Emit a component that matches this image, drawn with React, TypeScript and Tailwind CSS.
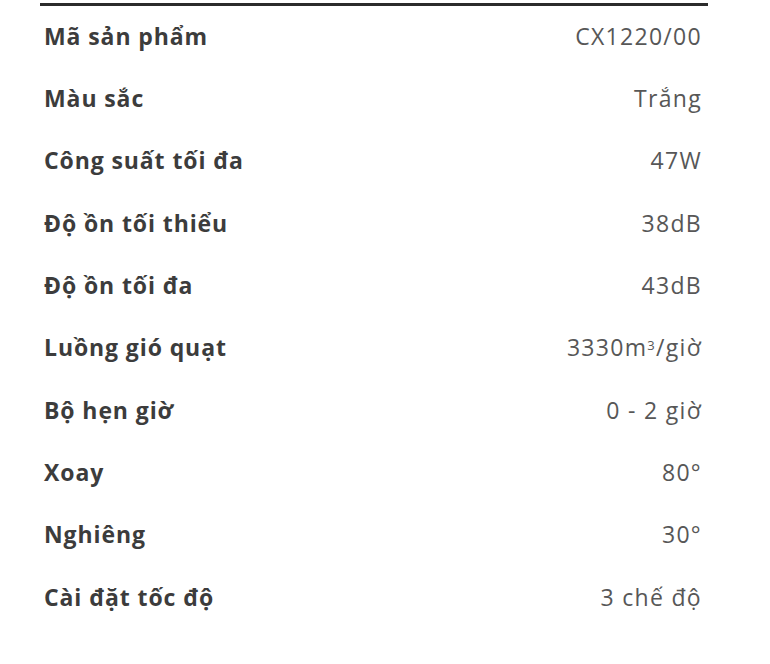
import React from "react";

// Types
interface specType {
  label: string;
  value: React.ReactNode;
}

const specs: specType[] = [
  { label: "Mã sản phẩm", value: "CX1220/00" },
  { label: "Màu sắc", value: "Trắng" },
  { label: "Công suất tối đa", value: "47W" },
  { label: "Độ ồn tối thiểu", value: "38dB" },
  { label: "Độ ồn tối đa", value: "43dB" },
  {
    label: "Luồng gió quạt",
    value: (
      <>
        3330m<sup className="text-[13px]">3</sup>/giờ
      </>
    ),
  },
  { label: "Bộ hẹn giờ", value: "0 - 2 giờ" },
  { label: "Xoay", value: "80°" },
  { label: "Nghiêng", value: "30°" },
  { label: "Cài đặt tốc độ", value: "3 chế độ" },
];

const App = () => {
  return (
    <div
      className="w-[770px] h-[664px] bg-white pt-[3px]"
      style={{ fontFamily: '"Open Sans", "Noto Sans", sans-serif' }}
    >
      <div className="ml-[40px] w-[668px] border-t-[3px] border-[#2b2b2b]">
        {specs.map((spec, index) => (
          <div
            key={index}
            className="h-[62.3px] flex items-center justify-between pl-[4px] pr-[6px] -translate-y-[1px]"
          >
            <p className="text-[23px] font-bold tracking-[0.9px] text-[#3c3c3c]">{spec.label}</p>
            <p className="text-[23px] tracking-[1.3px] text-[#575757]">{spec.value}</p>
          </div>
        ))}
      </div>
    </div>
  );
};

export default App;
